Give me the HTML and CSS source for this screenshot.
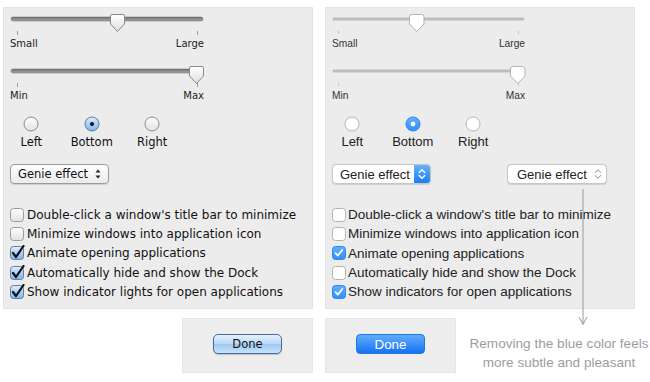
FILE: index.html
```html
<!DOCTYPE html>
<html>
<head>
<meta charset="utf-8">
<link rel="stylesheet" href="styles.css">
</head>
<body>
<svg class="defs" width="0" height="0" aria-hidden="true">
  <defs>
    <linearGradient id="gThumbOld" x1="0" y1="0" x2="0" y2="1">
      <stop offset="0" stop-color="#ffffff"/>
      <stop offset="1" stop-color="#dedede"/>
    </linearGradient>
    <linearGradient id="gTrackOld" x1="0" y1="0" x2="0" y2="1">
      <stop offset="0" stop-color="#6f6f6f"/>
      <stop offset="1" stop-color="#a8a8a8"/>
    </linearGradient>
    <linearGradient id="gBoxOld" x1="0" y1="0" x2="0" y2="1">
      <stop offset="0" stop-color="#ffffff"/>
      <stop offset="1" stop-color="#e2e2e2"/>
    </linearGradient>
    <linearGradient id="gBlueOld" x1="0" y1="0" x2="0" y2="1">
      <stop offset="0" stop-color="#e3f0fc"/>
      <stop offset="0.5" stop-color="#a9cff4"/>
      <stop offset="1" stop-color="#7fb6ec"/>
    </linearGradient>
    <linearGradient id="gBlueNew" x1="0" y1="0" x2="0" y2="1">
      <stop offset="0" stop-color="#62b0fc"/>
      <stop offset="1" stop-color="#2f8ffb"/>
    </linearGradient>
  </defs>
</svg>
<div class="page">
  <div class="top">
    <section class="panel old">
      <div class="slider">
        <svg width="196" height="24" viewBox="0 0 196 24">
          <rect x="1" y="4" width="192" height="4" rx="2" fill="url(#gTrackOld)" stroke="#6a6a6a" stroke-width="0.5"/>
          <line x1="7.5" y1="18" x2="7.5" y2="22" stroke="#9a9a9a"/>
          <line x1="187.5" y1="18" x2="187.5" y2="22" stroke="#9a9a9a"/>
          <path transform="translate(100,1)" d="M2,0.5 H13 Q14.5,0.5 14.5,2 V10 L7.5,17.5 L0.5,10 V2 Q0.5,0.5 2,0.5 Z" fill="url(#gThumbOld)" stroke="#8a8a8a"/>
        </svg>
        <div class="slider-labels"><span>Small</span><span>Large</span></div>
      </div>
      <div class="slider">
        <svg width="196" height="24" viewBox="0 0 196 24">
          <rect x="1" y="4" width="192" height="4" rx="2" fill="url(#gTrackOld)" stroke="#6a6a6a" stroke-width="0.5"/>
          <line x1="7.5" y1="18" x2="7.5" y2="22" stroke="#9a9a9a"/>
          <line x1="187.5" y1="18" x2="187.5" y2="22" stroke="#9a9a9a"/>
          <path transform="translate(179,1)" d="M2,0.5 H13 Q14.5,0.5 14.5,2 V10 L7.5,17.5 L0.5,10 V2 Q0.5,0.5 2,0.5 Z" fill="url(#gThumbOld)" stroke="#8a8a8a"/>
        </svg>
        <div class="slider-labels"><span>Min</span><span>Max</span></div>
      </div>
      <div class="radios">
        <div class="radio">
          <svg width="16" height="16" viewBox="0 0 16 16"><circle cx="8" cy="8" r="7" fill="url(#gBoxOld)" stroke="#8c8c8c"/></svg>
          <span>Left</span>
        </div>
        <div class="radio">
          <svg width="16" height="16" viewBox="0 0 16 16"><circle cx="8" cy="8" r="7" fill="url(#gBlueOld)" stroke="#5b7ea6"/><circle cx="8" cy="8" r="2" fill="#111"/></svg>
          <span>Bottom</span>
        </div>
        <div class="radio">
          <svg width="16" height="16" viewBox="0 0 16 16"><circle cx="8" cy="8" r="7" fill="url(#gBoxOld)" stroke="#8c8c8c"/></svg>
          <span>Right</span>
        </div>
      </div>
      <div class="popups">
        <div class="popup">
          <span>Genie effect</span>
          <svg class="updown" width="6" height="10" viewBox="0 0 6 10"><path d="M3,0.5 L5.5,3.5 H0.5 Z M3,9.5 L5.5,6.5 H0.5 Z" fill="#222"/></svg>
        </div>
      </div>
      <ul class="checks">
        <li><svg width="16" height="16" viewBox="0 0 16 16"><rect x="0.5" y="1.5" width="13" height="13" rx="3" fill="url(#gBoxOld)" stroke="#9b9b9b"/></svg><span>Double-click a window's title bar to minimize</span></li>
        <li><svg width="16" height="16" viewBox="0 0 16 16"><rect x="0.5" y="1.5" width="13" height="13" rx="3" fill="url(#gBoxOld)" stroke="#9b9b9b"/></svg><span>Minimize windows into application icon</span></li>
        <li><svg width="16" height="16" viewBox="0 0 16 16"><rect x="0.5" y="1.5" width="13" height="13" rx="3" fill="url(#gBlueOld)" stroke="#5d7fa6"/><path d="M3,8 L6,12 L13.5,1" fill="none" stroke="#111" stroke-width="2.2" stroke-linecap="round" stroke-linejoin="round"/></svg><span>Animate opening applications</span></li>
        <li><svg width="16" height="16" viewBox="0 0 16 16"><rect x="0.5" y="1.5" width="13" height="13" rx="3" fill="url(#gBlueOld)" stroke="#5d7fa6"/><path d="M3,8 L6,12 L13.5,1" fill="none" stroke="#111" stroke-width="2.2" stroke-linecap="round" stroke-linejoin="round"/></svg><span>Automatically hide and show the Dock</span></li>
        <li><svg width="16" height="16" viewBox="0 0 16 16"><rect x="0.5" y="1.5" width="13" height="13" rx="3" fill="url(#gBlueOld)" stroke="#5d7fa6"/><path d="M3,8 L6,12 L13.5,1" fill="none" stroke="#111" stroke-width="2.2" stroke-linecap="round" stroke-linejoin="round"/></svg><span>Show indicator lights for open applications</span></li>
      </ul>
    </section>

    <section class="panel new">
      <div class="slider">
        <svg width="196" height="24" viewBox="0 0 196 24">
          <rect x="0.5" y="4.5" width="192" height="3" rx="1.5" fill="#bdbdbd"/>
          <line x1="6.5" y1="18" x2="6.5" y2="21" stroke="#c4c4c4"/>
          <line x1="186.5" y1="18" x2="186.5" y2="21" stroke="#c4c4c4"/>
          <path transform="translate(77,1)" d="M2.5,0.5 H12.5 Q15,0.5 15,3 V10 L7.75,17.5 L0.5,10 V3 Q0.5,0.5 2.5,0.5 Z" fill="#ffffff" stroke="#b4b4b4"/>
        </svg>
        <div class="slider-labels"><span>Small</span><span>Large</span></div>
      </div>
      <div class="slider">
        <svg width="196" height="24" viewBox="0 0 196 24">
          <rect x="0.5" y="4.5" width="192" height="3" rx="1.5" fill="#bdbdbd"/>
          <line x1="6.5" y1="18" x2="6.5" y2="21" stroke="#c4c4c4"/>
          <line x1="186.5" y1="18" x2="186.5" y2="21" stroke="#c4c4c4"/>
          <path transform="translate(178,1)" d="M2.5,0.5 H12.5 Q15,0.5 15,3 V10 L7.75,17.5 L0.5,10 V3 Q0.5,0.5 2.5,0.5 Z" fill="#ffffff" stroke="#b4b4b4"/>
        </svg>
        <div class="slider-labels"><span>Min</span><span>Max</span></div>
      </div>
      <div class="radios">
        <div class="radio">
          <svg width="16" height="16" viewBox="0 0 16 16"><circle cx="8" cy="8" r="7" fill="#fff" stroke="#b6b6b6"/></svg>
          <span>Left</span>
        </div>
        <div class="radio">
          <svg width="16" height="16" viewBox="0 0 16 16"><circle cx="8" cy="8" r="7" fill="url(#gBlueNew)" stroke="#2b84ea"/><circle cx="8" cy="8" r="2.4" fill="#fff"/></svg>
          <span>Bottom</span>
        </div>
        <div class="radio">
          <svg width="16" height="16" viewBox="0 0 16 16"><circle cx="8" cy="8" r="7" fill="#fff" stroke="#b6b6b6"/></svg>
          <span>Right</span>
        </div>
      </div>
      <div class="popups">
        <div class="popup blue">
          <span>Genie effect</span>
          <span class="stepper"><svg width="8" height="12" viewBox="0 0 8 12"><path d="M1.2,4.5 L4,1.8 L6.8,4.5 M1.2,7.5 L4,10.2 L6.8,7.5" fill="none" stroke="#fff" stroke-width="1.4" stroke-linecap="round" stroke-linejoin="round"/></svg></span>
        </div>
        <div class="popup plain">
          <span>Genie effect</span>
          <svg class="chev" width="8" height="12" viewBox="0 0 8 12"><path d="M1.2,4.5 L4,1.8 L6.8,4.5 M1.2,7.5 L4,10.2 L6.8,7.5" fill="none" stroke="#8a8a8a" stroke-width="1" stroke-linecap="round" stroke-linejoin="round"/></svg>
        </div>
      </div>
      <ul class="checks">
        <li><svg width="14" height="14" viewBox="0 0 14 14"><rect x="0.5" y="0.5" width="13" height="13" rx="3" fill="#fff" stroke="#b3b3b3"/></svg><span>Double-click a window's title bar to minimize</span></li>
        <li><svg width="14" height="14" viewBox="0 0 14 14"><rect x="0.5" y="0.5" width="13" height="13" rx="3" fill="#fff" stroke="#b3b3b3"/></svg><span>Minimize windows into application icon</span></li>
        <li><svg width="14" height="14" viewBox="0 0 14 14"><rect x="0.5" y="0.5" width="13" height="13" rx="3" fill="url(#gBlueNew)" stroke="#2f88ee"/><path d="M3.5,7.2 L5.8,9.6 L10.3,4" fill="none" stroke="#fff" stroke-width="1.7" stroke-linecap="round" stroke-linejoin="round"/></svg><span>Animate opening applications</span></li>
        <li><svg width="14" height="14" viewBox="0 0 14 14"><rect x="0.5" y="0.5" width="13" height="13" rx="3" fill="#fff" stroke="#b3b3b3"/></svg><span>Automatically hide and show the Dock</span></li>
        <li><svg width="14" height="14" viewBox="0 0 14 14"><rect x="0.5" y="0.5" width="13" height="13" rx="3" fill="url(#gBlueNew)" stroke="#2f88ee"/><path d="M3.5,7.2 L5.8,9.6 L10.3,4" fill="none" stroke="#fff" stroke-width="1.7" stroke-linecap="round" stroke-linejoin="round"/></svg><span>Show indicators for open applications</span></li>
      </ul>
    </section>
  </div>

  <div class="bottom">
    <div class="btnpanel"><span class="done aqua">Done</span></div>
    <div class="btnpanel"><span class="done yosemite">Done</span></div>
    <p class="note">Removing the blue color feels<br>more subtle and pleasant</p>
  </div>

  <svg class="arrow" width="12" height="140" viewBox="0 0 12 140">
    <line x1="6" y1="0" x2="6" y2="135" stroke="#9a9a9a" stroke-width="1"/>
    <path d="M2,128 L6,135.5 L10,128" fill="none" stroke="#9a9a9a" stroke-width="1"/>
  </svg>
</div>
</body>
</html>
```

FILE: styles.css
```css
html, body {
  margin: 0;
  padding: 0;
  background: #ffffff;
}

.defs {
  position: absolute;
  width: 0;
  height: 0;
}

.page {
  position: relative;
  width: 650px;
  height: 382px;
  box-sizing: border-box;
  padding: 7px 0 0 3px;
  overflow: hidden;
}

.top {
  display: flex;
  gap: 12px;
}

.panel {
  width: 310px;
  height: 302px;
  box-sizing: border-box;
  background: #ececec;
  border: 1px solid #e3e3e3;
  padding: 5px 0 0 6px;
}

.old {
  font-family: "DejaVu Sans", sans-serif;
  color: #111;
}

.new {
  font-family: "Liberation Sans", Arial, sans-serif;
  color: #222;
}

.slider svg {
  display: block;
}

.slider + .slider {
  margin-top: 14px;
}

.slider-labels {
  display: flex;
  justify-content: space-between;
  width: 194px;
  height: 14px;
  line-height: 14px;
}

.old .slider-labels {
  font-size: 10px;
  color: #222;
}

.new .slider-labels {
  font-size: 10.2px;
  color: #333;
  width: 193px;
}

.radios {
  display: grid;
  grid-template-columns: repeat(3, 60.5px);
  margin: 13px 0 0 -9px;
}

.new .radios {
  margin-left: -10px;
}

.radio {
  display: flex;
  flex-direction: column;
  align-items: center;
}

.radio svg {
  display: block;
}

.radio span {
  margin-top: 3px;
  height: 14px;
  line-height: 14px;
}

.old .radio span {
  font-size: 11.5px;
}

.new .radio span {
  font-size: 13px;
}

.popups {
  display: flex;
  align-items: center;
  gap: 76px;
  margin-top: 15px;
}

.popup {
  display: flex;
  align-items: center;
  box-sizing: border-box;
  height: 20px;
  border-radius: 4px;
}

.old .popup {
  width: 99px;
  border: 1px solid #9a9a9a;
  background: linear-gradient(#ffffff, #ebebeb);
  box-shadow: 0 1px 1px rgba(0, 0, 0, 0.12);
  padding: 0 0 0 7px;
  font-size: 11.5px;
  gap: 7px;
}

.updown {
  display: block;
}

.new .popup {
  width: 99px;
  border: 1px solid #c6c6c6;
  background: #ffffff;
  box-shadow: 0 0.5px 1px rgba(0, 0, 0, 0.12);
  font-size: 13px;
  overflow: hidden;
}

.new .popup.blue {
  padding-left: 7px;
  justify-content: space-between;
}

.stepper {
  display: flex;
  align-items: center;
  justify-content: center;
  width: 16px;
  height: 100%;
  background: linear-gradient(#68b1fb, #1a7ef5);
}

.stepper svg,
.chev {
  display: block;
}

.new .popup.plain {
  width: 100px;
  padding-left: 9px;
  gap: 7px;
}

.checks {
  list-style: none;
  margin: 21px 0 0 0;
  padding: 0;
}

.checks li {
  display: flex;
  align-items: center;
  height: 19.3px;
  white-space: nowrap;
}

.checks svg {
  display: block;
  flex: none;
}

.old .checks li {
  font-size: 12px;
  gap: 1px;
}

.new .checks li {
  font-size: 13.5px;
  gap: 2px;
}

.bottom {
  display: flex;
  gap: 12px;
  margin: 9px 0 0 179px;
}

.btnpanel {
  width: 131px;
  height: 55px;
  box-sizing: border-box;
  background: #ededed;
  border: 1px solid #e6e6e6;
  display: flex;
  justify-content: center;
  align-items: flex-start;
  padding-top: 15px;
}

.done {
  display: flex;
  align-items: center;
  justify-content: center;
  width: 69px;
  height: 20px;
  box-sizing: border-box;
}

.aqua {
  border: 1px solid #4c6c98;
  border-radius: 5px;
  background: linear-gradient(#e4f1fd 0%, #b9d9f7 48%, #9dc8f1 52%, #c9e4fb 100%);
  box-shadow: 0 1px 1px rgba(0, 0, 0, 0.2);
  font-family: "DejaVu Sans", sans-serif;
  font-size: 11.5px;
  color: #111;
}

.yosemite {
  border: 1px solid #1f74e6;
  border-radius: 4px;
  background: linear-gradient(#5fadfd, #1772f3);
  font-family: "Liberation Sans", Arial, sans-serif;
  font-size: 13.4px;
  color: #ffffff;
}

.note {
  margin: 0;
  width: 182px;
  padding-top: 16px;
  text-align: center;
  font-family: "Liberation Sans", Arial, sans-serif;
  font-size: 13.6px;
  line-height: 19px;
  color: #9d9d9d;
}

.arrow {
  position: absolute;
  left: 577px;
  top: 189px;
}
```
